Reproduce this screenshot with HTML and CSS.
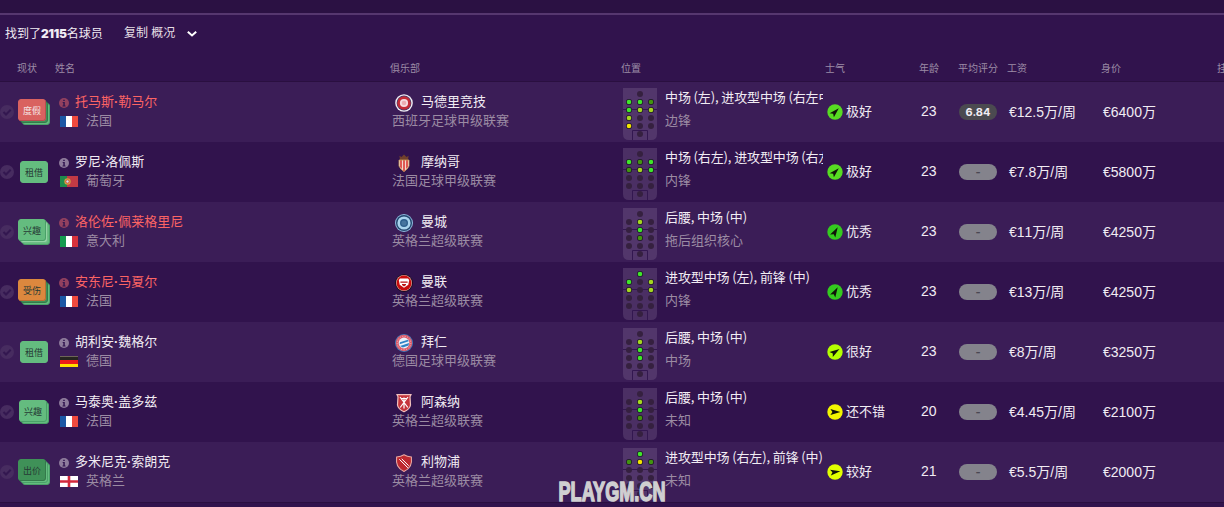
FILE: index.html
```html
<!DOCTYPE html>
<html lang="zh-CN">
<head>
    <meta charset="UTF-8">
    <meta name="viewport" content="width=device-width, initial-scale=1.0">
    <title>球员搜索</title>
    <link rel="stylesheet" href="styles.css">
</head>
<body>
    <div class="top-strip"></div>

    <div class="toolbar">
        <span class="found">找到了<b>2115</b>名球员</span>
        <span class="view">复制 概况</span>
        <svg class="chevron" width="12" height="8" viewBox="0 0 12 8"><path d="M1.800 1.800L6 5.500l4.200-3.700" fill="none" stroke="#fff" stroke-width="2"/></svg>
    </div>

    <div class="row head">
        <span></span>
        <span>现状</span>
        <span>姓名</span>
        <span>俱乐部</span>
        <span>位置</span>
        <span>士气</span>
        <span>年龄</span>
        <span>平均评分</span>
        <span>工资</span>
        <span>身价</span>
        <span>挂牌</span>
    </div>

    <div id="players"></div>

    <svg class="watermark" width="112" height="26" viewBox="0 0 112 26">
        <text x="2.500" y="22.500" textLength="107" lengthAdjust="spacingAndGlyphs">PLAYGM.CN</text>
    </svg>

    <script>
        const flags = {
            fr: '<path fill="#1c57a5" d="M0 0h6v11H0z"/><path fill="#fff" d="M6 0h6v11H6z"/><path fill="#f04a3e" d="M12 0h6v11h-6z"/>',
            pt: '<path fill="#1f8a4c" d="M0 0h7v11H0z"/><path fill="#c23a45" d="M7 0h11v11H7z"/><circle cx="7.5" cy="5.5" r="3.2" fill="#d0a040"/><circle cx="7.5" cy="5.5" r="2" fill="#d8453e"/><circle cx="7.5" cy="5.5" r="1.2" fill="#cfe3ee"/>',
            it: '<path fill="#159a50" d="M0 0h6v11H0z"/><path fill="#fff" d="M6 0h6v11H6z"/><path fill="#d8323c" d="M12 0h6v11h-6z"/>',
            de: '<path fill="#262420" d="M0 0h18v4H0z"/><path fill="#6d6558" d="M0 0h18v1H0z"/><path fill="#ec1c18" d="M0 4h18v4H0z"/><path fill="#ffe000" d="M0 8h18v3H0z"/>',
            en: '<path fill="#fff" d="M0 0h18v11H0z"/><path fill="#d2283c" d="M7.7 0h2.6v11H7.7zM0 4.3h18v2.4H0z"/>'
        };

        const crests = {
            atletico: '<circle cx="10" cy="10" r="8.8" fill="#f3edf3"/><circle cx="10" cy="10" r="7.4" fill="#353a72"/><circle cx="10" cy="10" r="6.8" fill="#c32c36"/><circle cx="10" cy="10" r="4.1" fill="#f5dde0"/><circle cx="10" cy="10" r="2.3" fill="#ecaeb2"/>',
            monaco: '<path d="M5.4 2.8L7.5 4 10 1.500 12.500 4l2.100-1.200-.7 4.400H6.100z" fill="#70402c"/><path d="M5 7h10v6q-1 3-5 5.600Q6 16 5 13z" fill="#f2d8ce"/><path d="M6.200 7h1.600v9L6.200 14zM9.200 7h1.600v11l-.8.5-.8-.5zM12.200 7h1.600v7l-1.600 2z" fill="#d93a34"/><path d="M5 7h10v6q-1 3-5 5.600Q6 16 5 13z" fill="none" stroke="#c69a55" stroke-width=".8"/>',
            city: '<circle cx="10" cy="10" r="9" fill="#8db9dd"/><circle cx="10" cy="10" r="8" fill="#23476f"/><circle cx="10" cy="10" r="6.6" fill="#a9d3ee"/><circle cx="10" cy="10" r="4" fill="#2e5e8c"/><circle cx="10" cy="10" r="2.6" fill="#46749e"/>',
            united: '<circle cx="10" cy="10" r="8.8" fill="#150b12"/><circle cx="10" cy="10" r="8" fill="#e7aaa6"/><circle cx="10" cy="10" r="7.4" fill="#c80d0d"/><path d="M6 5.500h8l1.200 1.500-.9 4.700L10 14.800l-4.300-3.100L4.800 7z" fill="#fff"/><path d="M6.400 8.500h7.200v1.200H6.400zM8 11h4v1l-2 1.500L8 12z" fill="#ba1515"/>',
            bayern: '<circle cx="10" cy="10" r="9" fill="#3a7dbd"/><circle cx="10" cy="10" r="8.2" fill="#dc5a69"/><circle cx="10" cy="10" r="6.8" fill="none" stroke="#f2b6bd" stroke-width="1" stroke-dasharray="1.100 1.400"/><circle cx="10" cy="10" r="5.4" fill="#e9f2fa"/><path d="M6 9.300l7.800-2.500 1 1.500-9.200 3zM6 13l9-2.900-.4 2.300-5.800 2z" fill="#2f83c6"/>',
            arsenal: '<path d="M3 1.600h14l-1 2.200.5 8.200q-.6 4.200-6.500 6.800Q4.100 16.200 3.500 12L4 3.800z" fill="#c5343b" stroke="#f2c2be" stroke-width="1.200"/><path d="M6 4l7.800 10.500M14 4l-7.800 10.500M10 4.500v11M7.300 5.500h5.400" stroke="#fff" stroke-width="1.200" fill="none"/>',
            liverpool: '<path d="M2.600 4Q7 3.700 10 1.800 13 3.700 17.400 4q.6 5.400-1 8.700-1.800 3.600-6.400 5.700-4.600-2.100-6.400-5.700Q2 9.400 2.600 4z" fill="#bd282f" stroke="#e9a9a4" stroke-width="1.100"/><path d="M5.300 6.300l8.600 8.500M7.700 5.800l7 6.900" stroke="#fff" stroke-width="1"/>'
        };

        const moods = {
            "极好": { color: "#57dc22", angle: -45 },
            "优秀": { color: "#34cb1f", angle: -60 },
            "很好": { color: "#b4ff00", angle: -33 },
            "较好": { color: "#e2ff00", angle: -8 },
            "还不错": { color: "#f2f600", angle: 0 }
        };

        const dotColors = { G: "#3fe62a", Y: "#a4d620", D: "#429410", W: "#f2e400" };

        // spots: 前锋 / 攻击中场 / 中场 / 后腰 / 后卫 / 门将, "." = 不能胜任
        const players = [
            { stack: ["red", "dark", "green"], status: "度假", name: "托马斯·勒马尔", hurt: true, flag: "fr", nation: "法国", crest: "atletico", club: "马德里竞技", league: "西班牙足球甲级联赛", spots: [".", "GGD", "GYY", "Y..", "W..", "."], pos: "中场 (左), 进攻型中场 (右左中)", role: "边锋", mood: "极好", age: 23, rating: "6.84", wage: "€12.5万/周", value: "€6400万" },
            { stack: ["green"], status: "租借", name: "罗尼·洛佩斯", flag: "pt", nation: "葡萄牙", crest: "monaco", club: "摩纳哥", league: "法国足球甲级联赛", spots: [".", "GDG", "DYG", "...", "...", "."], pos: "中场 (右左), 进攻型中场 (右左中)", role: "内锋", mood: "极好", age: 23, rating: "-", wage: "€7.8万/周", value: "€5800万" },
            { stack: ["green", "pale", "green"], status: "兴趣", name: "洛伦佐·佩莱格里尼", hurt: true, flag: "it", nation: "意大利", crest: "city", club: "曼城", league: "英格兰超级联赛", spots: [".", ".Y.", ".G.", ".D.", "...", "."], pos: "后腰, 中场 (中)", role: "拖后组织核心", mood: "优秀", age: 23, rating: "-", wage: "€11万/周", value: "€4250万" },
            { stack: ["orange", "dark", "green"], status: "受伤", name: "安东尼·马夏尔", hurt: true, flag: "fr", nation: "法国", crest: "united", club: "曼联", league: "英格兰超级联赛", spots: ["G", "G.Y", "Y.Y", "...", "...", "."], pos: "进攻型中场 (左), 前锋 (中)", role: "内锋", mood: "优秀", age: 23, rating: "-", wage: "€13万/周", value: "€4250万" },
            { stack: ["green"], status: "租借", name: "胡利安·魏格尔", flag: "de", nation: "德国", crest: "bayern", club: "拜仁", league: "德国足球甲级联赛", spots: [".", ".Y.", ".G.", ".G.", "...", "."], pos: "后腰, 中场 (中)", role: "中场", mood: "很好", age: 23, rating: "-", wage: "€8万/周", value: "€3250万" },
            { stack: ["green", "green"], status: "兴趣", name: "马泰奥·盖多兹", flag: "fr", nation: "法国", crest: "arsenal", club: "阿森纳", league: "英格兰超级联赛", spots: [".", ".Y.", ".G.", ".D.", "...", "."], pos: "后腰, 中场 (中)", role: "未知", mood: "还不错", age: 20, rating: "-", wage: "€4.45万/周", value: "€2100万" },
            { stack: ["dark", "green", "green"], status: "出价", name: "多米尼克·索朗克", flag: "en", nation: "英格兰", crest: "liverpool", club: "利物浦", league: "英格兰超级联赛", spots: ["G", "DWD", "...", "...", "...", "."], pos: "进攻型中场 (右左), 前锋 (中)", role: "未知", mood: "较好", age: 21, rating: "-", wage: "€5.5万/周", value: "€2000万" }
        ];

        function badge(p) {
            const fills = { red: "#d96260", green: "#64bc7f", dark: "#3f9158", pale: "#92d4a4", orange: "#dc883e" };
            const edges = { red: "#b94c50", green: "#4aa068", dark: "#34794b", pale: "#6dbb84", orange: "#b86d35" };
            const n = p.stack.length;
            let cards = "";
            for (let i = n - 1; i >= 0; i--) {
                const x = 4.5 - n + i * 2;
                cards += `<rect x="${x}" y="${x}" width="27" height="21" rx="2.5" fill="${fills[p.stack[i]]}" stroke="${i ? edges[p.stack[i]] : fills[p.stack[i]]}"/>`;
                if (i === 0 && n > 1) cards += `<path d="M${x + 1} ${x + 21}h23.500q2.500 0 2.500-2.500V${x + 1}" fill="none" stroke="${edges[p.stack[0]]}"/>`;
            }
            const ink = p.stack[0] === "red" ? "#f5e4e4" : "#263a35";
            return `<svg class="badge" width="34" height="28" viewBox="0 0 34 28">${cards}<text x="${18 - n}" y="${19.2 - n}" fill="${ink}">${p.status}</text></svg>`;
        }

        function pitch(spots) {
            let dots = "";
            spots.forEach((line, r) => {
                const xs = line.length === 1 ? [17] : [6, 17, 28];
                [...line].forEach((s, c) => {
                    const y = 6 + r * 8;
                    dots += `<circle cx="${xs[c]}" cy="${y}" r="3" fill="${s === "." ? "#35203f" : "#1d1428"}"/>`;
                    if (s !== ".") dots += `<circle cx="${xs[c]}" cy="${y}" r="2.3" fill="${dotColors[s]}"/>`;
                });
            });
            return `<svg class="pitch" width="34" height="52" viewBox="0 0 34 52"><path class="grass" d="M0 0h34v46q0 6-6 6H6q-6 0-6-6z"/><path class="lines" d="M0 21.5h34M9.500 52v-9.500h15V52"/>${dots}</svg>`;
        }

        document.getElementById("players").innerHTML = players.map(p => `
            <div class="row player">
                <svg class="check" width="14" height="14" viewBox="0 0 14 14"><circle cx="7" cy="7" r="7"/><path d="M3.500 7l2.500 2.500 4.700-4.700"/></svg>
                ${badge(p)}
                <div class="name">
                    <div class="line ${p.hurt ? "hurt" : ""}">
                        <svg class="info" width="10" height="10" viewBox="0 0 10 10"><circle cx="5" cy="5" r="5"/><path d="M4.200 1.700h1.600v1.400H4.200zM3.700 4h2.100v3.500h.7v.9h-3v-.9h.8V4.900h-.6z"/></svg>
                        <span>${p.name.replace("·", "<b>·</b>")}</span>
                    </div>
                    <div class="line sub">
                        <svg class="flag" width="18" height="11" viewBox="0 0 18 11">${flags[p.flag]}</svg>
                        <span>${p.nation}</span>
                    </div>
                </div>
                <div class="club">
                    <div class="line">
                        <svg class="crest" width="20" height="20" viewBox="0 0 20 20">${crests[p.crest]}</svg>
                        <span>${p.club}</span>
                    </div>
                    <div class="line sub">${p.league}</div>
                </div>
                <div class="position">
                    ${pitch(p.spots)}
                    <div class="roles"><div>${p.pos}</div><div class="sub">${p.role}</div></div>
                </div>
                <div class="mood">
                    <svg width="16" height="16" viewBox="-8 -8 16 16"><circle r="7.700" fill="${moods[p.mood].color}"/><path d="M5.400 0L-4.600-3-2.600 0-4.600 3z" transform="rotate(${moods[p.mood].angle})" fill="#101408"/></svg>
                    <span>${p.mood}</span>
                </div>
                <div class="num">${p.age}</div>
                <div class="rating ${p.rating === "-" ? "none" : ""}">${p.rating}</div>
                <div class="num">${p.wage}</div>
                <div class="num">${p.value}</div>
            </div>`).join("");
    </script>
</body>
</html>
```
FILE: styles.css
```css
* {
    box-sizing: border-box;
    margin: 0;
    padding: 0;
}

body {
    font-family: "Liberation Sans", "Noto Sans CJK SC", sans-serif;
    font-size: 13px;
    background: #31134d;
    color: #f1ecf3;
    height: 507px;
    overflow: hidden;
}

svg {
    display: block;
    flex: none;
}

.top-strip {
    height: 15px;
    background: #2b1143;
    border-bottom: 2px solid #56376f;
}

.toolbar {
    display: flex;
    align-items: center;
    height: 37px;
    padding-left: 5px;
    font-size: 12px;
    white-space: nowrap;
}

.found {
    width: 119px;
    padding-bottom: 2px;
}

.found b {
    font-family: Inter, sans-serif;
    font-size: 12px;
    font-weight: 900;
    line-height: 1;
    letter-spacing: -0.2px;
}

.view {
    width: 62px;
    color: #e6dfe4;
    padding-bottom: 4px;
}

.row {
    display: grid;
    grid-template-columns: 17px 38px 335px 231px 204px 94px 39px 49px 94px 116px 40px;
    width: 1257px;
    align-items: center;
    white-space: nowrap;
}

.head {
    height: 30px;
    padding-top: 2px;
    font-size: 10px;
    color: #9c8ca6;
    border-bottom: 1px solid #2a0f40;
}

.player {
    height: 60px;
}

.player:nth-child(odd) {
    background: #3b1d57;
}

#players {
    border-bottom: 1px solid #2a0f40;
}

.check {
    fill: #472c60;
}

.check path {
    fill: none;
    stroke: #331750;
    stroke-width: 2;
}

.badge {
    overflow: visible;
}

.badge text {
    font-family: "Noto Sans CJK SC", sans-serif;
    font-size: 9px;
    text-anchor: middle;
}

.line {
    display: flex;
    align-items: center;
    height: 19px;
}

.line span,
.club .sub {
    padding-bottom: 4px;
}

.sub {
    color: #9b8ba3;
}

.name {
    padding-left: 4px;
}

.hurt {
    color: #fb6464;
}

.info {
    fill: #8e7c9c;
    margin-right: 6px;
}

.info path {
    fill: #331750;
}

.hurt .info {
    fill: #92405f;
}

.flag {
    margin: 0 8px 0 1px;
}

.club {
    padding-left: 2px;
}

.crest {
    margin: 0 7px 0 2px;
}

.position {
    display: flex;
    gap: 8px;
    width: 202px;
    padding: 4px 0 0 2px;
    overflow: hidden;
}

.grass {
    fill: rgba(130, 110, 150, 0.32);
}

.lines {
    fill: none;
    stroke: #331750;
}

.roles {
    overflow: hidden;
    margin-top: -3px;
    font-family: "Noto Sans CJK SC", sans-serif;
    letter-spacing: -0.12px;
    line-height: 23px;
}

.roles .sub {
    letter-spacing: 0;
}

.mood {
    display: flex;
    align-items: center;
    gap: 3px;
    padding-left: 2px;
}

.mood span {
    padding-bottom: 3px;
}

.num {
    padding: 0 0 3px 2px;
    font-size: 14px;
    font-kerning: none;
}

.rating {
    width: 38px;
    height: 16px;
    margin-left: 1px;
    border-radius: 8px;
    background: #4b4a50;
    font-family: Inter, sans-serif;
    font-size: 11px;
    font-weight: bold;
    line-height: 16px;
    text-align: center;
}

.rating.none {
    background: #84838c;
    color: #4a4753;
}

/* floats over the last row */
.watermark {
    position: absolute;
    left: 556px;
    top: 478px;
}

.watermark text {
    font-size: 28px;
    font-weight: bold;
    fill: #d0cfd1;
    stroke: #d0cfd1;
    stroke-width: 1.6;
}
```
